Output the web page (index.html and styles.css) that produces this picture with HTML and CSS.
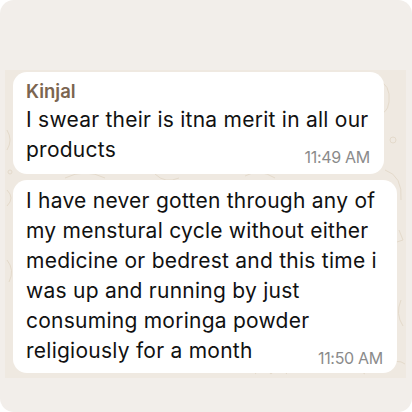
FILE: index.html
```html
<!DOCTYPE html>
<html lang="en">
  <head>
    <meta charset="utf-8"/>
    <title>Chat</title>
    <link rel="stylesheet" href="styles.css">
  </head>
  <body>
    <div class="card">
      <div class="chat">
        <svg class="doodles" width="401" height="308" viewBox="0 0 401 308" fill="none" stroke="#e4dacb" stroke-width="1">
          <path d="M40 8 q10 -8 20 0"/>
          <path d="M120 4 q15 10 30 0"/>
          <path d="M250 6 q12 -6 24 2"/>
          <path d="M372 10 q14 4 12 22 q-2 14 -12 10"/>
          <circle cx="388" cy="70" r="3"/>
          <path d="M380 100 q18 6 16 30"/>
          <path d="M2 60 q6 10 0 20"/>
          <path d="M2 120 q8 8 0 16"/>
          <circle cx="5" cy="102" r="2"/>
          <path d="M60 108 q20 -10 40 0"/>
          <path d="M150 104 q10 10 24 4"/>
          <path d="M240 106 q14 -8 30 2"/>
          <path d="M394 160 l4 10 l-6 2"/>
          <path d="M2 190 q8 10 2 22"/>
          <path d="M396 230 q-6 14 2 26"/>
          <path d="M30 300 q14 -8 24 2"/>
          <path d="M110 302 q10 -10 20 0"/>
          <path d="M180 300 l8 -6 l6 6"/>
          <path d="M250 304 q8 -10 16 0 q8 -10 16 0"/>
          <path d="M330 300 q16 -8 30 4"/>
          <path d="M384 296 q8 -8 16 -2"/>
        </svg>
        <div class="bubble first">
          <div class="name">Kinjal</div>
          <p class="text"><span class="msg">I swear their is itna merit in all our products</span><span class="time">11:49 AM</span></p>
        </div>
        <div class="bubble second">
          <p class="text"><span class="msg">I have never gotten through any of my menstural cycle without either medicine or bedrest and this time i was up and running by just consuming moringa powder religiously for a month</span><span class="time">11:50 AM</span></p>
        </div>
      </div>
    </div>
  </body>
</html>
```
FILE: styles.css
```css
body {
  margin: 0;
  background-color: #ffffff;
  font-family: "Inter", "Liberation Sans", sans-serif;
}
.card {
  width: 412px;
  height: 412px;
  box-sizing: border-box;
  padding: 70px 6px 0 5px;
  border-radius: 14px;
  background-color: #f2eeea;
}
.chat {
  position: relative;
  height: 308px;
  padding: 2px 0 0 8px;
  box-sizing: border-box;
  background-color: #efe9e1;
}
.doodles {
  position: absolute;
  left: 0;
  top: 0;
}
.bubble {
  position: relative;
  box-sizing: border-box;
  background-color: #ffffff;
  border-radius: 14px;
  padding: 6px 12px 9px 13px;
  color: #111111;
}
.first {
  width: 371px;
}
.second {
  width: 384px;
  margin-top: 6px;
  padding-right: 14px;
  padding-bottom: 7px;
}
.name {
  font-size: 18.5px;
  line-height: 27px;
  font-weight: 600;
  color: #7b6550;
}
.text {
  margin: 0;
  font-size: 21px;
  line-height: 30px;
  letter-spacing: 0.25px;
}
.first .time {
  margin-right: 2px;
}
.time {
  float: right;
  position: relative;
  top: 13px;
  font-size: 16px;
  line-height: 18px;
  letter-spacing: -0.3px;
  color: #8b8b8b;
}
```
